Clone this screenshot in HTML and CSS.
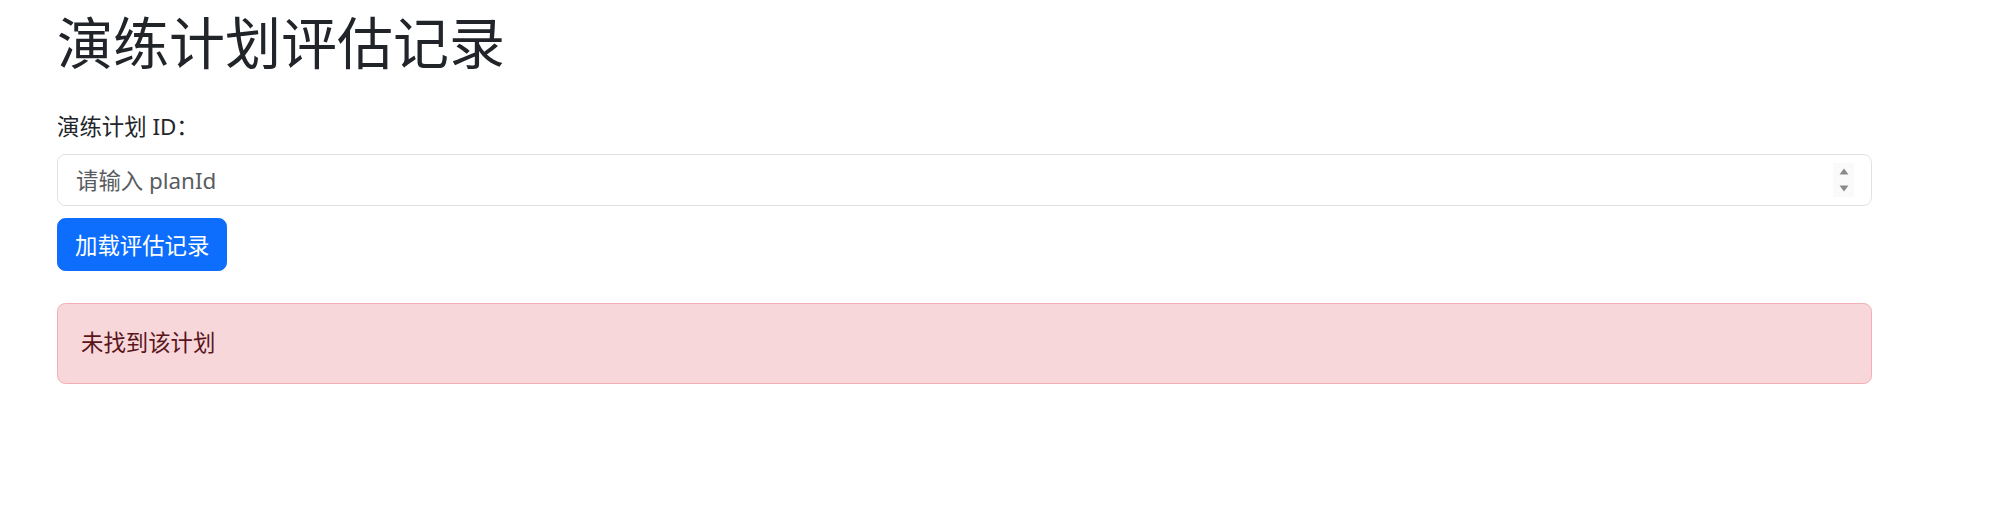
FILE: index.html
```html
<!DOCTYPE html>
<html>
<head>
<meta http-equiv="Content-Type" content="text/html;charset=utf-8" >
<title>演练计划评估记录</title>
<link rel="stylesheet" href="styles.css">
</head>
<body>
<div class="page">
    <h1 class="title">演练计划评估记录</h1>

    <label class="field-label" for="planId">演练计划 ID：</label>
    <div class="number-field">
        <input class="field-input" id="planId" type="text" placeholder="请输入 planId">
        <span class="spinner">
            <svg width="10" height="7" viewBox="0 0 10 7"><path d="M5 0.5 L9.5 6.5 L0.5 6.5 Z" fill="#8a8a8a"/></svg>
            <svg width="10" height="7" viewBox="0 0 10 7"><path d="M0.5 0.5 L9.5 0.5 L5 6.5 Z" fill="#8a8a8a"/></svg>
        </span>
    </div>
    <button class="load-btn">加载评估记录</button>

    <div class="alert-danger">未找到该计划</div>
</div>
</body>
</html>
```

FILE: styles.css
```css
body{
    margin:0;
    background-color:#fff;
    color:#212529;
    font-family:"Noto Sans","Noto Sans CJK SC",sans-serif;
    font-size:22.4px;
    line-height:1.5;
}

.page{
    width:1815px;
    margin-left:57px;
    padding-top:9px;
}

.title{
    margin:0 0 33.6px 0;
    font-size:56px;
    font-weight:400;
    line-height:1.2;
    color:#212529;
}

.field-label{
    display:block;
    margin-bottom:11px;
}

.number-field{
    position:relative;
}

.field-input{
    display:block;
    box-sizing:border-box;
    width:100%;
    height:52px;
    padding:8px 18px;
    font-family:inherit;
    font-size:22.4px;
    color:#212529;
    background-color:#fff;
    border:1.4px solid #dee2e6;
    border-radius:8.4px;
    outline:none;
}

.field-input::placeholder{
    color:#595c5f;
}

.spinner{
    position:absolute;
    right:18px;
    top:9px;
    width:21px;
    height:34px;
    display:flex;
    flex-direction:column;
    align-items:center;
    justify-content:center;
    gap:10px;
    background-color:#fafafa;
}

.spinner svg{
    display:block;
}

.load-btn{
    display:block;
    margin-top:12px;
    height:53px;
    padding:0 17px;
    font-family:inherit;
    font-size:22.4px;
    color:#fff;
    background-color:#0d6efd;
    border:1.4px solid #0d6efd;
    border-radius:8.4px;
}

.alert-danger{
    box-sizing:border-box;
    margin-top:32px;
    height:81px;
    padding:22px 23px;
    color:#58151c;
    background-color:#f8d7da;
    border:1.4px solid #f1aeb5;
    border-radius:8.4px;
}
```
